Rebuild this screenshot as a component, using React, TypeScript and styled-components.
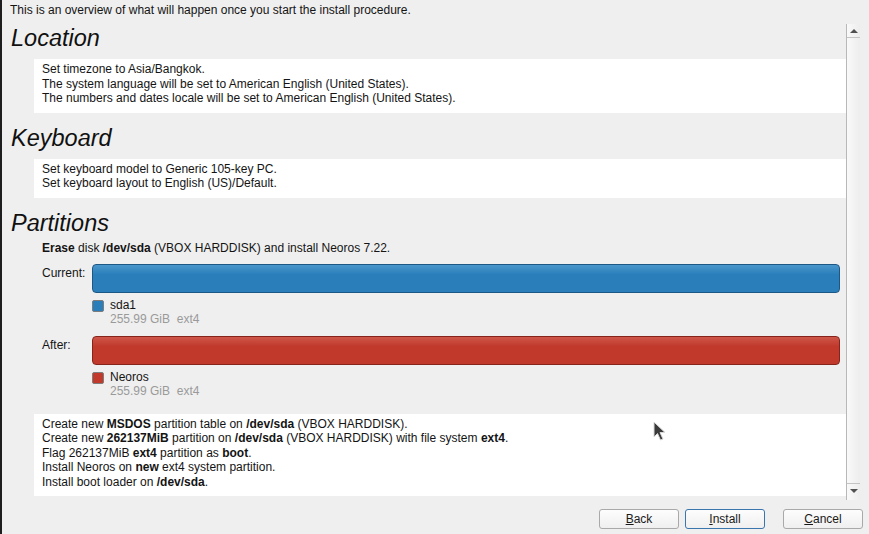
import React from 'react';
import styled, { createGlobalStyle } from 'styled-components';

const GlobalStyle = createGlobalStyle`
   html, body {
      margin: 0;
      padding: 0;
      background: #efefef;
   }
   body {
      font-family: "Liberation Sans", Arial, sans-serif;
      color: #141414;
   }
`;

const Window = styled.div`
   position: relative;
   width: 869px;
   height: 534px;
   box-sizing: border-box;
   border-left: 2px solid #1e1e1e;
   background: #efefef;
   display: flex;
   flex-direction: column;
   overflow: hidden;
`;

const Intro = styled.div`
   height: 24px;
   box-sizing: border-box;
   padding: 3px 0 0 8px;
   font-size: 12px;
   line-height: 14.5px;
`;

const ScrollArea = styled.div`
   display: flex;
   height: 476px;
   margin-right: 9px;
`;

const Content = styled.div`
   flex: 1;
   overflow: hidden;
   padding-top: 1px;
   display: flex;
   flex-direction: column;
`;

const Section = styled.section`
   display: flex;
   flex-direction: column;
   & + & {
      margin-top: 12px;
   }
`;

const Heading = styled.h2`
   margin: 0;
   padding-left: 9px;
   font-size: 23.5px;
   line-height: 26px;
   font-style: italic;
   font-weight: normal;
   color: #111;
`;

const Box = styled.div<{ $gap?: number }>`
   margin-top: ${p => p.$gap ?? 8}px;
   margin-left: 32px;
   padding: 3px 8px 7px;
   background: #ffffff;
   font-size: 12px;
   line-height: 14.5px;
`;

const PartitionBody = styled.div`
   margin-left: 32px;
   padding: 5px 6px 0 8px;
   font-size: 12px;
   line-height: 14.5px;
`;

const Line = styled.div``;

const BarRow = styled.div<{ $gap: number }>`
   display: flex;
   align-items: flex-start;
   margin-top: ${p => p.$gap}px;
`;

const BarLabel = styled.div`
   width: 50px;
   padding-top: 2.5px;
   flex-shrink: 0;
`;

const Bar = styled.div<{ $color: string; $light: string; $edge: string }>`
   flex: 1;
   height: 29px;
   box-sizing: border-box;
   border: 1px solid ${p => p.$edge};
   border-radius: 4px;
   background: linear-gradient(to bottom, ${p => p.$light} 0%, ${p => p.$color} 35%, ${p => p.$color} 100%);
`;

const Legend = styled.div`
   display: flex;
   align-items: flex-start;
   margin: 7px 0 0 50px;
   line-height: 13.5px;
`;

const Swatch = styled.div<{ $color: string }>`
   width: 12px;
   height: 12px;
   margin-top: 0.5px;
   box-sizing: border-box;
   border: 1px solid #7d7d7d;
   border-radius: 2px;
   background: ${p => p.$color};
   margin-right: 6px;
`;

const LegendText = styled.div`
   display: flex;
   flex-direction: column;
   margin-top: -0.5px;
`;

const SubText = styled.span`
   color: #9a9a9a;
   white-space: pre;
`;

const Scrollbar = styled.div`
   width: 14px;
   box-sizing: border-box;
   border-left: 1px solid #b8b8b8;
   background: linear-gradient(to right, #f9f9f9, #ededed);
   display: flex;
   flex-direction: column;
   justify-content: space-between;
   padding-bottom: 3px;
`;

const ArrowButton = styled.div<{ $down?: boolean }>`
   height: 13px;
   display: flex;
   align-items: center;
   justify-content: center;
   ${p => (p.$down ? 'border-top' : 'border-bottom')}: 1px solid #c4c4c4;
`;

const Triangle = styled.div<{ $down?: boolean }>`
   width: 0;
   height: 0;
   border-left: 4px solid transparent;
   border-right: 4px solid transparent;
   ${p => (p.$down ? 'border-top' : 'border-bottom')}: 4px solid #505050;
`;

const ButtonRow = styled.div`
   display: flex;
   justify-content: flex-end;
   padding: 9px 6px 0 0;
`;

const Button = styled.button<{ $focused?: boolean; $space?: number }>`
   width: 80px;
   height: 20px;
   margin-left: ${p => p.$space ?? 0}px;
   padding: 0;
   box-sizing: border-box;
   border: 1px solid ${p => (p.$focused ? '#3a76ad' : '#a9a9a9')};
   border-radius: 3px;
   background: linear-gradient(to bottom, #fdfdfd, #efefef);
   font-family: "Liberation Sans", Arial, sans-serif;
   font-size: 12px;
   color: #1a1a1a;
`;

const Mnemonic = styled.span`
   text-decoration: underline;
`;

const Pointer = styled.svg`
   position: absolute;
   left: 651px;
   top: 421px;
`;

const App = () => {
   return (
      <Window>
         <GlobalStyle />
         <Intro>This is an overview of what will happen once you start the install procedure.</Intro>
         <ScrollArea>
            <Content>
               <Section>
                  <Heading>Location</Heading>
                  <Box>
                     <Line>Set timezone to Asia/Bangkok.</Line>
                     <Line>The system language will be set to American English (United States).</Line>
                     <Line>The numbers and dates locale will be set to American English (United States).</Line>
                  </Box>
               </Section>

               <Section>
                  <Heading>Keyboard</Heading>
                  <Box>
                     <Line>Set keyboard model to Generic 105-key PC.</Line>
                     <Line>Set keyboard layout to English (US)/Default.</Line>
                  </Box>
               </Section>

               <Section>
                  <Heading>Partitions</Heading>
                  <PartitionBody>
                     <Line><b>Erase</b> disk <b>/dev/sda</b> (VBOX HARDDISK) and install Neoros 7.22.</Line>

                     <BarRow $gap={8.5}>
                        <BarLabel>Current:</BarLabel>
                        <Bar $color="#2a7fba" $light="#4a96cb" $edge="#1c5785" />
                     </BarRow>
                     <Legend>
                        <Swatch $color="#2a7fba" />
                        <LegendText>
                           <span>sda1</span>
                           <SubText>255.99 GiB  ext4</SubText>
                        </LegendText>
                     </Legend>

                     <BarRow $gap={9.5}>
                        <BarLabel>After:</BarLabel>
                        <Bar $color="#c0392b" $light="#cd564a" $edge="#86241b" />
                     </BarRow>
                     <Legend>
                        <Swatch $color="#c0392b" />
                        <LegendText>
                           <span>Neoros</span>
                           <SubText>255.99 GiB  ext4</SubText>
                        </LegendText>
                     </Legend>
                  </PartitionBody>
                  <Box $gap={15.5}>
                     <Line>Create new <b>MSDOS</b> partition table on <b>/dev/sda</b> (VBOX HARDDISK).</Line>
                     <Line>Create new <b>262137MiB</b> partition on <b>/dev/sda</b> (VBOX HARDDISK) with file system <b>ext4</b>.</Line>
                     <Line>Flag 262137MiB <b>ext4</b> partition as <b>boot</b>.</Line>
                     <Line>Install Neoros on <b>new</b> ext4 system partition.</Line>
                     <Line>Install boot loader on <b>/dev/sda</b>.</Line>
                  </Box>
               </Section>
            </Content>
            <Scrollbar>
               <ArrowButton><Triangle /></ArrowButton>
               <ArrowButton $down><Triangle $down /></ArrowButton>
            </Scrollbar>
         </ScrollArea>
         <ButtonRow>
            <Button><Mnemonic>B</Mnemonic>ack</Button>
            <Button $focused $space={6}><Mnemonic>I</Mnemonic>nstall</Button>
            <Button $space={18}><Mnemonic>C</Mnemonic>ancel</Button>
         </ButtonRow>
         <Pointer width="14" height="21" viewBox="0 0 14 21">
            <path d="M1 1 L1 16 L4.5 12.5 L7.5 19 L10 18 L7 11.5 L12 11.5 Z" fill="#3a3a3a" stroke="#d8d8d8" strokeWidth="1" strokeLinejoin="round" />
         </Pointer>
      </Window>
   );
};

export default App;
